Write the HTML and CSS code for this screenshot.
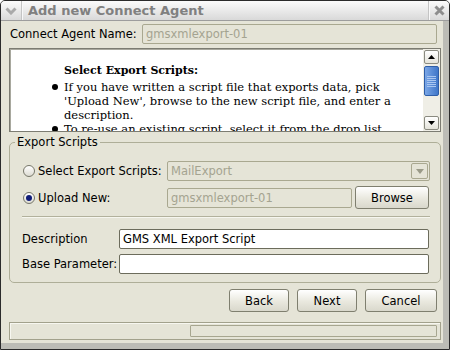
FILE: index.html
```html
<!DOCTYPE html>
<html>
<head>
<meta charset="utf-8">
<link rel="stylesheet" href="styles.css">
</head>
<body>
<div class="window">
  <div class="titlebar">
    <div class="tb-btn tb-menu">
      <svg width="12" height="8" viewBox="0 0 12 8"><path d="M1.5 1.5 L6 6 L10.5 1.5" fill="none" stroke="#a9a9a9" stroke-width="3"/></svg>
    </div>
    <div class="title">Add new Connect Agent</div>
    <div class="tb-btn tb-close">
      <svg width="11" height="11" viewBox="0 0 11 11"><path d="M1.5 1.5 L9.5 9.5 M9.5 1.5 L1.5 9.5" stroke="#8d8d8d" stroke-width="3"/></svg>
    </div>
  </div>
  <div class="frame">
    <div class="client">
      <div class="name-row">
        <label class="name-label">Connect Agent Name:</label>
        <div class="field disabled name-field">gmsxmlexport-01</div>
      </div>

      <div class="pane">
        <div class="pane-content">
          <h3 class="pane-heading">Select Export Scripts:</h3>
          <ul class="pane-list">
            <li>If you have written a script file that exports data, pick 'Upload New', browse to the new script file, and enter a description.</li>
            <li>To re-use an existing script, select it from the drop list.</li>
          </ul>
        </div>
        <div class="scrollbar">
          <div class="sb-btn"><svg width="7" height="4" viewBox="0 0 7 4"><path d="M0 4 L3.5 0 L7 4 Z" fill="#000"/></svg></div>
          <div class="sb-track"><div class="sb-thumb"><div class="sb-grip"></div></div></div>
          <div class="sb-btn"><svg width="7" height="4" viewBox="0 0 7 4"><path d="M0 0 L3.5 4 L7 0 Z" fill="#000"/></svg></div>
        </div>
      </div>

      <fieldset class="group">
        <legend class="group-legend">Export Scripts</legend>
        <div class="grow row-select">
          <div class="radio-label"><span class="radio"></span>Select Export Scripts:</div>
          <div class="field disabled combo">
            <span class="combo-text">MailExport</span>
            <span class="combo-btn"><svg width="8" height="5" viewBox="0 0 8 5"><path d="M0 0 L4 5 L8 0 Z" fill="#9a9a88"/></svg></span>
          </div>
        </div>
        <div class="grow row-upload">
          <div class="radio-label"><span class="radio checked"></span>Upload New:</div>
          <div class="field disabled upload-field">gmsxmlexport-01</div>
          <button class="btn browse">Browse</button>
        </div>
        <div class="separator"></div>
        <div class="grow row-text">
          <div class="text-label">Description</div>
          <div class="field text-field">GMS XML Export Script</div>
        </div>
        <div class="grow row-text row-base">
          <div class="text-label">Base Parameter:</div>
          <div class="field text-field"></div>
        </div>
      </fieldset>

      <div class="buttons">
        <button class="btn btn-back">Back</button>
        <button class="btn btn-next">Next</button>
        <button class="btn btn-cancel">Cancel</button>
      </div>

      <div class="status">
        <div class="status-box"></div>
      </div>
    </div>
  </div>
</div>
</body>
</html>
```

FILE: styles.css
```css
* { box-sizing: border-box; }
html, body { margin: 0; padding: 0; }
body {
  width: 450px;
  height: 350px;
  overflow: hidden;
  background: #ffffff;
  font-family: "DejaVu Sans", sans-serif;
  font-size: 11.5px;
  color: #000;
}

.window {
  width: 450px;
  height: 350px;
  border: 1px solid #2b2b2b;
  border-radius: 5px 5px 0 0;
  background: #bcbcb6;
  display: flex;
  flex-direction: column;
  overflow: hidden;
}

.titlebar {
  height: 20px;
  flex: none;
  display: flex;
  align-items: stretch;
  background: linear-gradient(#fbfbfb, #d9d9d9);
  border-bottom: 1px solid #9d9d9d;
}
.tb-btn {
  width: 21px;
  display: flex;
  align-items: center;
  justify-content: center;
  flex: none;
}
.tb-menu { border-right: 1px solid #c4c4c4; box-shadow: 1px 0 0 #f8f8f8; }
.tb-close { border-left: 1px solid #c4c4c4; box-shadow: inset 1px 0 0 #f8f8f8; width: 21px; }
.title {
  flex: 1;
  padding-left: 6px;
  font-size: 13px;
  font-weight: bold;
  line-height: 19px;
  color: #808080;
}

.frame {
  flex: 1;
  display: flex;
  padding: 0 6px 6px 0;
}
.client {
  flex: 1;
  background: #e5e4d7;
  padding: 3px 2px 0 8px;
  display: flex;
  flex-direction: column;
}

.field {
  height: 20px;
  border: 1px solid #6c6c5c;
  border-radius: 2px;
  background: #fff;
  padding: 0 3px;
  line-height: 18px;
  white-space: nowrap;
  overflow: hidden;
}
.field.disabled {
  background: #e5e4d7;
  border-color: #a9a890;
  color: #a4a390;
}

.name-row {
  height: 20px;
  display: flex;
  align-items: center;
}
.name-label { width: 133px; padding-left: 1px; }
.name-field { width: 295px; }

.pane {
  margin-top: 4px;
  height: 84px;
  border: 1px solid #7c7c72;
  box-shadow: inset 1px 1px 0 #a8a89e;
  background: #fff;
  display: flex;
  overflow: hidden;
}
.pane-content {
  flex: 1;
  padding: 15px 19px 0 54px;
  font-family: "DejaVu Serif", serif;
  font-size: 11.5px;
  line-height: 14px;
  overflow: hidden;
}
.pane-heading {
  margin: 0 0 2px 0;
  font-size: 11px;
  font-weight: bold;
  line-height: 14px;
}
.pane-list {
  margin: 0;
  padding: 0;
  list-style: none;
}
.pane-list li {
  display: flex;
  margin-left: -12px;
}
.pane-list li::before {
  content: "";
  flex: none;
  width: 6px;
  height: 6px;
  border-radius: 50%;
  background: #000;
  margin: 4px 6px 0 0;
}

.scrollbar {
  width: 17px;
  flex: none;
  padding: 1px;
  background: #efeee6;
  display: flex;
  flex-direction: column;
}
.sb-btn {
  height: 14px;
  flex: none;
  border: 1px solid #8a8a80;
  border-radius: 2px;
  background: linear-gradient(#ffffff, #e4e3da);
  display: flex;
  align-items: center;
  justify-content: center;
}
.sb-track { flex: 1; padding-top: 2px; }
.sb-thumb {
  height: 30px;
  border: 1px solid #2f5ea8;
  border-radius: 2px;
  background: linear-gradient(90deg, #7aa6e6, #3f76c9);
  display: flex;
  align-items: center;
  justify-content: center;
}
.sb-grip {
  width: 9px;
  height: 11px;
  background: repeating-linear-gradient(#a9c6f0 0 1px, transparent 1px 2px);
}

.group {
  margin: 3px 0 0 0;
  padding: 12px 10px 8px 13px;
  border: 1px solid #aeae98;
  border-radius: 5px;
  min-width: 0;
}
.group-legend {
  padding: 0 2px;
  margin-left: -8px;
  line-height: 14px;
}
.grow {
  display: flex;
  align-items: center;
}
.row-select { height: 20px; }
.row-upload { height: 23px; margin-top: 5px; }
.radio-label {
  width: 144px;
  display: flex;
  align-items: center;
  white-space: nowrap;
}
.radio {
  width: 12px;
  height: 12px;
  border: 1px solid #77776a;
  border-radius: 50%;
  background: linear-gradient(#ffffff, #dcdbd2);
  margin-right: 3px;
  flex: none;
  display: flex;
  align-items: center;
  justify-content: center;
}
.radio.checked::after {
  content: "";
  width: 6px;
  height: 6px;
  border-radius: 50%;
  background: #101c78;
}
.combo {
  width: 263px;
  display: flex;
  align-items: center;
  justify-content: space-between;
  padding: 0 1px 0 3px;
}
.combo-btn {
  width: 17px;
  height: 16px;
  border: 1px solid #a9a890;
  border-radius: 2px;
  display: flex;
  align-items: center;
  justify-content: center;
}
.upload-field { width: 185px; }

.btn {
  height: 23px;
  border: 1px solid #7f7f6f;
  border-radius: 3px;
  background: linear-gradient(#ffffff, #e9e8de 55%, #d9d8cc);
  font-family: "DejaVu Sans", sans-serif;
  font-size: 11.5px;
  color: #000;
  padding: 0;
}
.browse { width: 74px; margin-left: 3px; }

.separator {
  margin: 7px 0 0 -1px;
  height: 2px;
  border-top: 1px solid #b2b19c;
  border-bottom: 1px solid #f6f6ef;
}
.row-text { height: 20px; margin-top: 11px; }
.row-base { margin-top: 5px; }
.text-label { width: 97px; margin-left: -1px; }
.text-field { width: 310px; }

.buttons {
  margin-top: 6px;
  height: 23px;
  display: flex;
  justify-content: flex-end;
  gap: 8px;
  padding-right: 4px;
}
.btn-back, .btn-next { width: 60px; }
.btn-cancel { width: 72px; }

.status {
  margin-top: 10px;
  height: 18px;
  border: 1px solid #a2a18c;
  box-shadow: inset 1px 1px 0 #f7f7f0;
  display: flex;
  justify-content: flex-end;
  align-items: center;
  padding-right: 3px;
}
.status-box {
  width: 247px;
  height: 12px;
  border: 1px solid #a7a690;
  border-radius: 1px;
}
```
